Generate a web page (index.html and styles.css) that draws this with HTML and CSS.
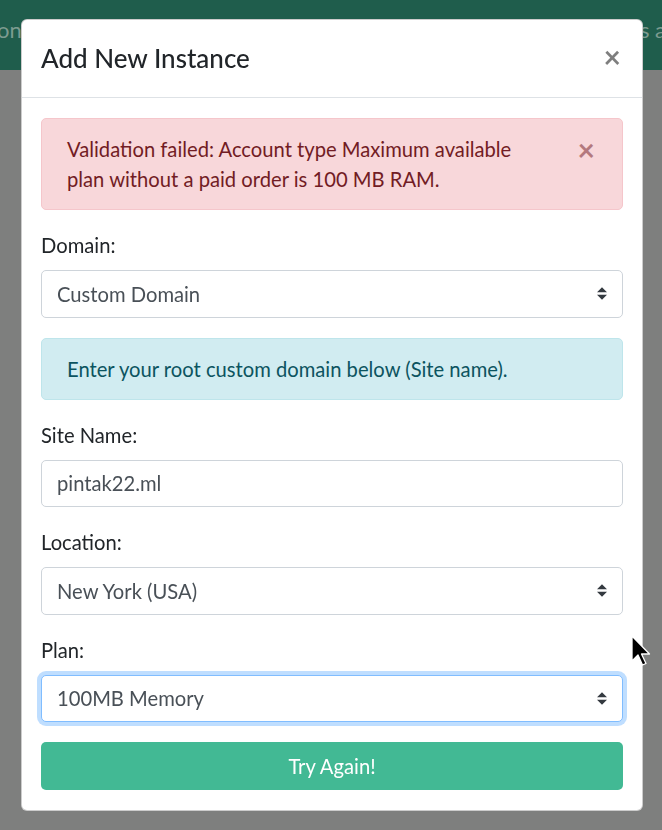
FILE: index.html
```html
<!DOCTYPE html>
<html>
<head>
<meta charset="utf-8">
<link rel="stylesheet" href="styles.css">
</head>
<body>
<div class="nav">
  <span class="nav-left">on</span>
  <span class="nav-right">s a</span>
</div>
<div class="overlay">
  <div class="dialog">
    <div class="dlg-header">
      <h5 class="dlg-title">Add New Instance</h5>
      <span class="close">×</span>
    </div>
    <div class="dlg-body">
      <div class="alert alert-danger">
        Validation failed: Account type Maximum available plan without a paid order is 100 MB RAM.
        <span class="close close-alert">×</span>
      </div>
      <div class="group">
        <label class="lbl">Domain:</label>
        <div class="control select">
          <span>Custom Domain</span>
          <svg class="arrows" width="10" height="13" viewBox="0 0 4 5"><path d="M2 0L0 2h4zm0 5L0 3h4z" fill="#343a40"/></svg>
        </div>
      </div>
      <div class="alert alert-info">Enter your root custom domain below (Site name).</div>
      <div class="group">
        <label class="lbl">Site Name:</label>
        <div class="control"><span>pintak22.ml</span></div>
      </div>
      <div class="group">
        <label class="lbl">Location:</label>
        <div class="control select">
          <span>New York (USA)</span>
          <svg class="arrows" width="10" height="13" viewBox="0 0 4 5"><path d="M2 0L0 2h4zm0 5L0 3h4z" fill="#343a40"/></svg>
        </div>
      </div>
      <div class="group">
        <label class="lbl">Plan:</label>
        <div class="control select focus">
          <span>100MB Memory</span>
          <svg class="arrows" width="10" height="13" viewBox="0 0 4 5"><path d="M2 0L0 2h4zm0 5L0 3h4z" fill="#343a40"/></svg>
        </div>
      </div>
      <div class="btn">Try Again!</div>
    </div>
  </div>
  <svg class="cursor" width="20" height="32" viewBox="0 0 20 32">
    <path d="M1 1 L1 26 L7 20 L11.5 30 L15 28.5 L10.5 19 L18.5 19 Z" fill="#000" stroke="#fff" stroke-width="1.3" stroke-linejoin="round"/>
  </svg>
</div>
</body>
</html>
```

FILE: styles.css
```css
* { box-sizing: border-box; }
html, body { margin: 0; padding: 0; }
body {
  background: #7e7f7e;
  width: 662px;
  height: 830px;
  overflow: hidden;
  font-family: Lato, "Open Sans", sans-serif;
  font-size: 20.2px;
  line-height: 30px;
  color: #212529;
}
.nav {
  height: 70px;
  background: #1f5d4c;
  display: flex;
  justify-content: space-between;
  align-items: center;
  color: #7c9b90;
  font-size: 22px;
  padding-bottom: 10px;
  overflow: hidden;
}
.nav-left { margin-left: -3px; }
.nav-right { margin-right: -4px; }
.overlay {
  position: fixed;
  inset: 0;
  padding-top: 19px;
}
.dialog {
  width: 622px;
  margin: 0 0 0 21px;
  background: #fff;
  border: 1px solid rgba(0,0,0,.2);
  border-radius: 6px;
}
.dlg-header {
  display: flex;
  align-items: center;
  justify-content: space-between;
  padding: 20px 19px 20px 19px;
  border-bottom: 1px solid #dee2e6;
}
.dlg-title {
  margin: 0;
  font-size: 26px;
  line-height: 37px;
  font-weight: 500;
  color: #212529;
}
.close {
  font-size: 30px;
  font-weight: 700;
  line-height: 1;
  color: #000;
  opacity: .5;
  margin-right: 2px;
  margin-top: -6px;
}
.dlg-body { padding: 20px 19px 20px 19px; }
.alert {
  position: relative;
  padding: 15px 25px;
  border: 1px solid transparent;
  border-radius: 5px;
  margin-bottom: 20px;
}
.alert-danger {
  background: #f8d7da;
  border-color: #f5c6cb;
  color: #721c24;
  padding-right: 80px;
}
.close-alert {
  position: absolute;
  top: 21px;
  right: 25px;
  color: #721c24;
  font-size: 30px;
}
.alert-info {
  background: #d1ecf1;
  border-color: #bee5eb;
  color: #0c5460;
}
.group { margin-bottom: 20px; }
.lbl { display: block; margin-bottom: 10px; }
.control {
  height: 47.5px;
  display: flex;
  align-items: center;
  justify-content: space-between;
  padding: 0 15px 0 15px;
  border: 1px solid #ced4da;
  border-radius: 5px;
  color: #495057;
  background: #fff;
}
.arrows { display: block; }
.focus {
  border-color: #80bdff;
  box-shadow: 0 0 0 4px rgba(0,123,255,.25);
}
.btn {
  height: 47.5px;
  display: flex;
  align-items: center;
  justify-content: center;
  background: #42b994;
  color: #fff;
  border-radius: 5px;
}
.cursor {
  position: absolute;
  left: 631px;
  top: 635px;
}
```
